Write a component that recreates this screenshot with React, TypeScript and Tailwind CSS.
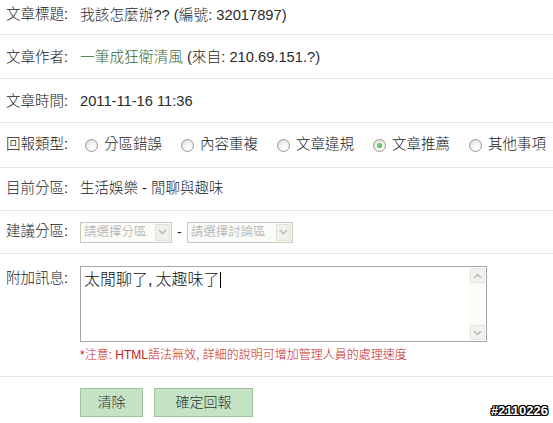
import React from "react";

const font = "font-['Liberation_Sans','Noto_Sans_CJK_TC',sans-serif]";

function T({ children }: { children: string }) {
  const parts = children.split(/([\u3000-\u9fff\uff00-\uffef]+)/);
  return (
    <>
      {parts.map((p, i) =>
        /[\u3000-\u9fff\uff00-\uffef]/.test(p) ? (
          <span key={i} className="font-light">
            {p}
          </span>
        ) : (
          <React.Fragment key={i}>{p}</React.Fragment>
        )
      )}
    </>
  );
}

function Radio({ checked }: { checked?: boolean }) {
  return (
    <span className="relative inline-flex h-[13px] w-[13px] items-center justify-center rounded-full border border-[#9a9a9a] bg-[radial-gradient(circle_at_60%_65%,#ffffff_0%,#f4f4f0_40%,#d4d4cc_100%)]">
      {checked && (
        <span className="h-[5px] w-[5px] rounded-full bg-[radial-gradient(circle_at_40%_40%,#7ce07c_0%,#2c9a2c_100%)]" />
      )}
    </span>
  );
}

function Option({ label, checked }: { label: string; checked?: boolean }) {
  return (
    <span className="flex items-center gap-[6px]">
      <Radio checked={checked} />
      <span className="text-[14.5px] font-light">{label}</span>
    </span>
  );
}

function Chevron({ up }: { up?: boolean }) {
  return (
    <svg width="9" height="6" viewBox="0 0 9 6">
      <path
        d={up ? "M1 5 L4.5 1.5 L8 5" : "M1 1 L4.5 4.5 L8 1"}
        fill="none"
        stroke="#b8beb8"
        strokeWidth="1.6"
      />
    </svg>
  );
}

function FakeSelect({ text, width }: { text: string; width: string }) {
  return (
    <div
      className={`flex h-[21px] items-stretch border border-[#c9c9c0] bg-[#fbfbf8] ${width}`}
    >
      <span className="flex flex-1 items-center overflow-hidden whitespace-nowrap pl-[3px] text-[12.5px] font-light leading-none text-[#a3a3a3]">
        {text}
      </span>
      <span className="m-[1px] flex w-[15px] shrink-0 items-center justify-center border border-[#e2e2da] bg-[#f1f1ec]">
        <Chevron />
      </span>
    </div>
  );
}

function Label({ text, className = "" }: { text: string; className?: string }) {
  return (
    <div className={`w-[80px] shrink-0 pl-[6px] text-[14.5px] ${className}`}>
      <T>{text}</T>
    </div>
  );
}

export default function App() {
  return (
    <div className={`relative h-[423px] w-[553px] overflow-hidden bg-white text-[#222] ${font}`}>
      <div className="flex flex-col">
        <div className="flex h-[35px] items-center border-b border-[#e9e9e9] pb-[4px]">
          <Label text="文章標題:" />
          <div className="text-[14.7px] text-[#2a2a2a]">
            <T>我該怎麼辦?? (編號: 32017897)</T>
          </div>
        </div>
        <div className="flex h-[44px] items-center border-b border-[#e9e9e9] pt-[2px]">
          <Label text="文章作者:" />
          <div className="text-[14.7px] text-[#2a2a2a]">
            <span className="font-light text-[#336633]">一筆成狂衛清風</span> <T>(來自: 210.69.151.?)</T>
          </div>
        </div>
        <div className="flex h-[44px] items-center border-b border-[#e9e9e9] pt-[2px]">
          <Label text="文章時間:" />
          <div className="text-[14.7px] text-[#2a2a2a]">2011-11-16 11:36</div>
        </div>
        <div className="flex h-[45px] items-center border-b border-[#e9e9e9]">
          <Label text="回報類型:" />
          <div className="flex items-center gap-[19px] pl-[5px]">
            <Option label="分區錯誤" />
            <Option label="內容重複" />
            <Option label="文章違規" />
            <Option label="文章推薦" checked />
            <Option label="其他事項" />
          </div>
        </div>
        <div className="flex h-[43px] items-center border-b border-[#e9e9e9]">
          <Label text="目前分區:" />
          <div className="text-[14.5px]">
            <T>生活娛樂 - 閒聊與趣味</T>
          </div>
        </div>
        <div className="flex h-[43px] items-center border-b border-[#e9e9e9]">
          <Label text="建議分區:" />
          <div className="flex items-center gap-[5px]">
            <FakeSelect text="請選擇分區" width="w-[92px]" />
            <span className="text-[14px]">-</span>
            <FakeSelect text="請選擇討論區" width="w-[106px]" />
          </div>
        </div>
        <div className="flex h-[123px] border-b border-[#e9e9e9] pt-[12px]">
          <Label text="附加訊息:" className="pt-[2px]" />
          <div className="flex flex-col">
            <div className="flex h-[76px] w-[407px] border border-[#a5a5a5] bg-white">
              <div className="flex-1 whitespace-nowrap pl-[3px] pt-[2px] text-[16px] leading-[20px] text-[#111]">
                <span className="font-light">太閒聊了</span>
                <span className="mr-[3px]">,</span>
                <span className="font-light">太趣味了</span>
                <span className="ml-[1px] inline-block h-[16px] w-[1px] translate-y-[3px] bg-black" />
              </div>
              <div className="flex w-[17px] flex-col justify-between bg-[#fcfcf9] p-[1px]">
                <span className="flex h-[15px] items-center justify-center border border-[#e6e6de] bg-[#f3f3ee]">
                  <Chevron up />
                </span>
                <span className="flex h-[15px] items-center justify-center border border-[#e6e6de] bg-[#f3f3ee]">
                  <Chevron />
                </span>
              </div>
            </div>
            <div className="mt-[5px] text-[12px] leading-[16px] text-[#c41a1a]">
              <T>*注意: HTML語法無效, 詳細的說明可增加管理人員的處理速度</T>
            </div>
          </div>
        </div>
        <div className="flex gap-[11px] pl-[80px] pt-[11px]">
          <button className="flex h-[29px] w-[63px] items-center justify-center border border-[#9fc49f] bg-[#c4e3c4] text-[14px] font-light text-[#333]">
            清除
          </button>
          <button className="flex h-[29px] w-[99px] items-center justify-center border border-[#9fc49f] bg-[#c4e3c4] text-[14px] font-light text-[#333]">
            確定回報
          </button>
        </div>
      </div>
      <div className="absolute bottom-[3px] right-[5px] text-[13px] font-bold text-white [text-shadow:1px_0_0_#000,-1px_0_0_#000,0_1px_0_#000,0_-1px_0_#000,1px_1px_0_#000,-1px_-1px_0_#000,1px_-1px_0_#000,-1px_1px_0_#000]">
        #2110226
      </div>
    </div>
  );
}
